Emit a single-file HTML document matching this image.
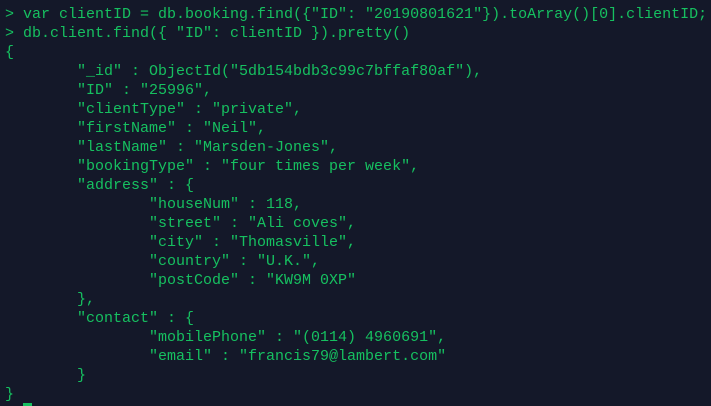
<!DOCTYPE html>
<html><head><meta charset="utf-8"><style>
html,body{margin:0;padding:0;background:#141829;width:711px;height:406px;overflow:hidden;position:relative}
pre{margin:0;padding:5px 0 0 5px;font-family:"Liberation Mono",monospace;font-size:15px;line-height:19px;color:#16c060;tab-size:8;white-space:pre}
.cur{position:absolute;left:23px;top:403px;width:9px;height:3px;background:#16c060}
</style></head><body><pre>&gt; var clientID = db.booking.find({"ID": "20190801621"}).toArray()[0].clientID;
&gt; db.client.find({ "ID": clientID }).pretty()
{
        "_id" : ObjectId("5db154bdb3c99c7bffaf80af"),
        "ID" : "25996",
        "clientType" : "private",
        "firstName" : "Neil",
        "lastName" : "Marsden-Jones",
        "bookingType" : "four times per week",
        "address" : {
                "houseNum" : 118,
                "street" : "Ali coves",
                "city" : "Thomasville",
                "country" : "U.K.",
                "postCode" : "KW9M 0XP"
        },
        "contact" : {
                "mobilePhone" : "(0114) 4960691",
                "email" : "francis79@lambert.com"
        }
}</pre><div class="cur"></div></body></html>
